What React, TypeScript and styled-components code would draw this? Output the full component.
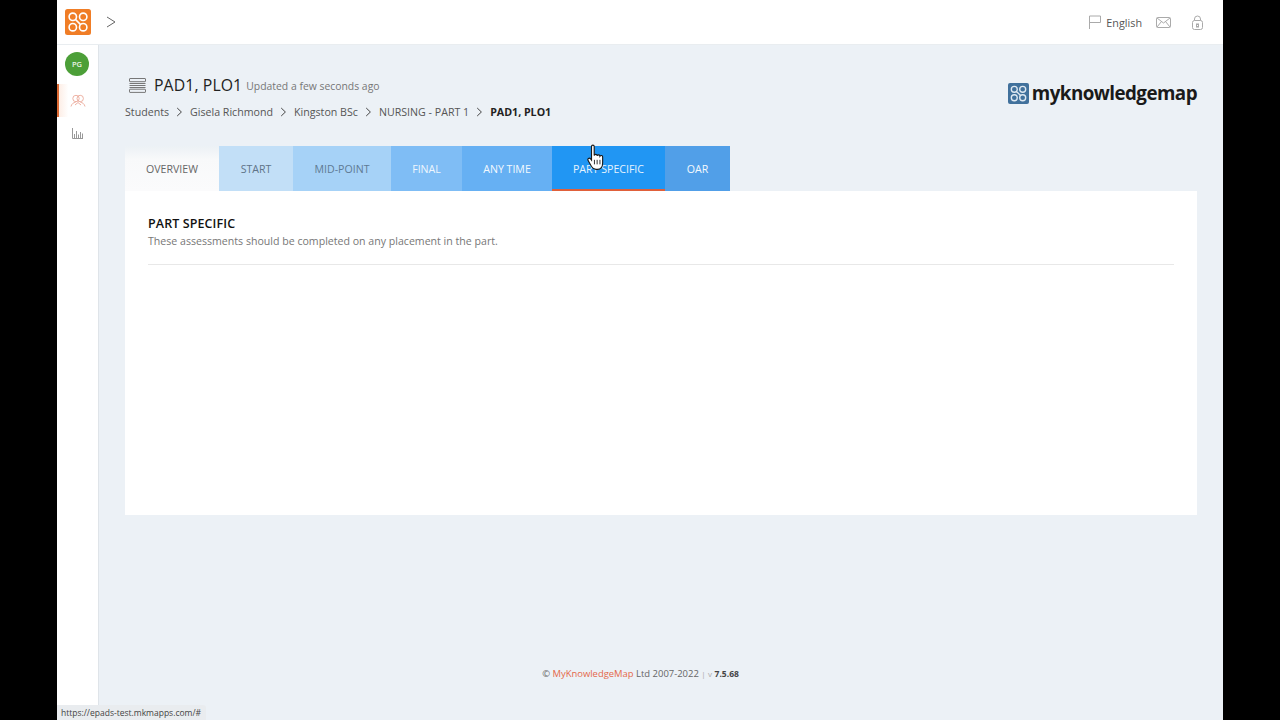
import React from 'react';
import styled, { createGlobalStyle } from 'styled-components';

const GlobalStyle = createGlobalStyle`
  html, body {
    margin: 0;
    padding: 0;
    height: 100%;
    overflow: hidden;
    background: #000;
    font-family: "Open Sans", "Liberation Sans", sans-serif;
  }
`;

const Frame = styled.div`
  position: relative;
  box-sizing: border-box;
  width: 1280px;
  height: 720px;
  padding: 0 57px;
  background: #000;
`;

const Screen = styled.div`
  display: flex;
  flex-direction: column;
  height: 100%;
  background: #ecf1f6;
`;

const TopBar = styled.header`
  display: flex;
  flex: 0 0 45px;
  box-sizing: border-box;
  align-items: center;
  justify-content: space-between;
  padding: 0 20px 0 8px;
  background: #fff;
  border-bottom: 1px solid #e9edf0;
`;

const TopLeft = styled.div`
  display: flex;
  align-items: center;
  gap: 15px;
`;

const TopRight = styled.div`
  display: flex;
  align-items: center;
  color: #555;
  font-size: 10.8px;
`;

const Lang = styled.span`
  display: flex;
  align-items: center;
  gap: 5px;
  margin-right: 14px;
`;

const LockWrap = styled.span`
  display: flex;
  margin-left: 21px;
`;

const Body = styled.div`
  display: flex;
  flex: 1;
  min-height: 0;
`;

const Sidebar = styled.aside`
  display: flex;
  flex: 0 0 42px;
  box-sizing: border-box;
  flex-direction: column;
  align-items: center;
  padding: 7px 1px 0 0;
  background: #fff;
  border-right: 1px solid #dfe4e9;
`;

const Avatar = styled.div`
  display: flex;
  width: 24px;
  height: 24px;
  align-items: center;
  justify-content: center;
  margin-bottom: 8px;
  border-radius: 50%;
  background: #4c9f38;
  color: #e8f4e4;
  font-size: 7.5px;
  font-weight: 600;
`;

const NavItem = styled.div<{ $active?: boolean }>`
  display: flex;
  box-sizing: border-box;
  align-self: stretch;
  height: 33px;
  align-items: center;
  justify-content: center;
  background: ${p => (p.$active ? 'linear-gradient(90deg, #fdeee6, #fff 25%)' : 'none')};
  border-left: ${p => (p.$active ? '2px solid #dd6a33' : 'none')};
`;

const Main = styled.main`
  display: flex;
  flex: 1;
  flex-direction: column;
  min-width: 0;
  padding: 29px 26px 0;
`;

const HeadRow = styled.div`
  display: flex;
  align-items: flex-start;
  justify-content: space-between;
`;

const TitleRow = styled.div`
  display: flex;
  height: 22px;
  align-items: center;
  padding-left: 4px;
`;

const Title = styled.h1`
  margin: 0 4px 0 8px;
  color: #222;
  font-size: 15.8px;
  font-weight: 400;
  letter-spacing: 0.1px;
`;

const Updated = styled.span`
  margin-top: 2px;
  color: #777;
  font-size: 10.4px;
`;

const Crumbs = styled.nav`
  display: flex;
  align-items: center;
  gap: 7px;
  height: 20px;
  margin-top: 6px;
  color: #555;
  font-size: 10.65px;
`;

const CrumbNow = styled.b`
  color: #222;
  font-weight: 700;
`;

const Logo = styled.div`
  display: flex;
  align-items: center;
  gap: 3px;
  margin-top: 6px;
  color: #1a1a1a;
  font-size: 18.8px;
  font-weight: 700;
  letter-spacing: -0.55px;
`;

const Tabs = styled.div`
  display: flex;
  height: 45px;
  margin-top: 24px;
`;

const Tab = styled.div<{ $bg: string; $fg: string; $width: number; $active?: boolean }>`
  display: flex;
  flex: 0 0 ${p => p.$width}px;
  align-items: center;
  justify-content: center;
  background: ${p => p.$bg};
  color: ${p => p.$fg};
  font-size: 10.6px;
  white-space: nowrap;
  box-shadow: ${p => (p.$active ? 'inset 0 -2px 0 #e0603a' : 'none')};
`;

const Card = styled.section`
  display: flex;
  flex-direction: column;
  height: 324px;
  box-sizing: border-box;
  padding: 24px 23px 0;
  background: #fff;
`;

const CardTitle = styled.h2`
  margin: 0;
  color: #111;
  font-size: 12.5px;
  font-weight: 600;
  letter-spacing: 0.1px;
  line-height: 17px;
`;

const CardText = styled.p`
  margin: 1px 0 0;
  padding-bottom: 15px;
  color: #777;
  font-size: 10.6px;
  line-height: 16px;
  border-bottom: 1px solid #e8e8e8;
`;

const Footer = styled.footer`
  margin-top: 152px;
  padding-right: 41px;
  color: #666;
  font-size: 9.45px;
  line-height: 14px;
  text-align: center;
`;

const FooterLink = styled.span`
  color: #e4684a;
`;

const FooterSep = styled.span`
  color: #aaa;
  font-size: 8px;
`;

const FooterVersion = styled.b`
  color: #444;
  font-size: 8.5px;
  font-weight: 700;
`;

const StatusTip = styled.div`
  position: absolute;
  left: 57px;
  bottom: 0;
  height: 15px;
  padding: 0 5px 0 4px;
  background: #e9ecef;
  border-top-right-radius: 3px;
  color: #444;
  font-size: 8.5px;
  line-height: 16px;
`;

const Cursor = styled.svg`
  position: absolute;
  left: 587px;
  top: 144px;
`;

const MapMark = ({ color, width }: { color: string; width: number }) => (
  <g fill="none" stroke={color} strokeWidth={width}>
    <circle cx="7.8" cy="7.8" r="3.7" />
    <circle cx="18.2" cy="7.8" r="3.7" />
    <circle cx="7.8" cy="18.2" r="3.7" />
    <circle cx="18.2" cy="18.2" r="3.7" />
    <path d="M10.4 10.4l5.2 5.2" />
  </g>
);

const tabs = [
  { label: 'OVERVIEW', width: 94, bg: 'linear-gradient(#ecf1f5, #f8f9fa 30%, #fbfbfc)', fg: '#666' },
  { label: 'START', width: 74, bg: '#c2dff7', fg: '#5f7488' },
  { label: 'MID-POINT', width: 98, bg: '#a6d2f7', fg: '#5f7a94' },
  { label: 'FINAL', width: 71, bg: '#7fbdf5', fg: '#eef6fd' },
  { label: 'ANY TIME', width: 90, bg: '#66b0f3', fg: '#f3f9fe' },
  { label: 'PART SPECIFIC', width: 113, bg: '#2196f3', fg: '#e6f3fe', active: true },
  { label: 'OAR', width: 65, bg: '#519fe8', fg: '#f3f9fe' },
];

const crumbs = ['Students', 'Gisela Richmond', 'Kingston BSc', 'NURSING - PART 1'];

const CrumbArrow = () => (
  <svg width="7" height="10" viewBox="0 0 7 10" fill="none" stroke="#444" strokeWidth="1">
    <path d="M1.2 1l4.2 4-4.2 4" />
  </svg>
);

export default function App() {
  return (
    <Frame>
      <GlobalStyle />
      <Screen>
        <TopBar>
          <TopLeft>
            <svg width="26" height="26" viewBox="0 0 26 26">
              <rect width="26" height="26" rx="2.5" fill="#f07d26" />
              <MapMark color="#fff" width={1.6} />
            </svg>
            <svg width="10" height="12" viewBox="0 0 10 12" fill="none" stroke="#666" strokeWidth="1">
              <path d="M1 1l8 5-8 5" />
            </svg>
          </TopLeft>
          <TopRight>
            <Lang>
              <svg width="12" height="14" viewBox="0 0 12 14" fill="none" stroke="#aaa" strokeWidth="1">
                <path d="M.5 14V1h11v6.5H.5" />
              </svg>
              English
            </Lang>
            <svg width="15" height="11" viewBox="0 0 15 11" fill="none" stroke="#aaa" strokeWidth="1">
              <rect x="0.5" y="0.5" width="14" height="10" rx="1" />
              <path d="M1 1l6.5 5L14 1M1 10l4.5-5.5M14 10L9.5 4.5" />
            </svg>
            <LockWrap>
              <svg width="11" height="15" viewBox="0 0 11 15" fill="none" stroke="#aaa" strokeWidth="1">
                <rect x="0.5" y="5.5" width="10" height="9" rx="2" />
                <path d="M2.5 5.5V4a3 3 0 0 1 6 0v1.5" />
                <rect x="4.5" y="9" width="2" height="3" />
              </svg>
            </LockWrap>
          </TopRight>
        </TopBar>
        <Body>
          <Sidebar>
            <Avatar>PG</Avatar>
            <NavItem $active>
              <svg width="16" height="14" viewBox="0 0 16 14" fill="none" stroke="#eba99a" strokeWidth="0.9">
                <circle cx="6" cy="4.5" r="3.2" />
                <circle cx="10.2" cy="4.5" r="3.2" />
                <path d="M1 12.5c.6-2.6 2.4-4 4.6-4.2M15 12.5c-.6-2.6-2.4-4-4.6-4.2M5 11l3-2.5 3 2.5" />
              </svg>
            </NavItem>
            <NavItem>
              <svg width="11" height="11" viewBox="0 0 11 11" fill="none" stroke="#999" strokeWidth="1">
                <path d="M.5 0v10.5H11M2.5 10V6M4.5 10V3M6.5 10V6.5M8.5 10V4M10.5 10V5.5" />
              </svg>
            </NavItem>
          </Sidebar>
          <Main>
            <HeadRow>
              <div>
                <TitleRow>
                  <svg width="17" height="15" viewBox="0 0 17 15" fill="none" stroke="#777" strokeWidth="1">
                    <rect x="0.5" y="0.5" width="16" height="3.2" rx="0.5" />
                    <path d="M0.5 5.5h16M0.5 7.5h16M0.5 9.5h16" />
                    <rect x="0.5" y="11.2" width="16" height="3.2" rx="0.5" />
                  </svg>
                  <Title>PAD1, PLO1</Title>
                  <Updated>Updated a few seconds ago</Updated>
                </TitleRow>
                <Crumbs>
                  {crumbs.map(c => (
                    <React.Fragment key={c}>
                      <span>{c}</span>
                      <CrumbArrow />
                    </React.Fragment>
                  ))}
                  <CrumbNow>PAD1, PLO1</CrumbNow>
                </Crumbs>
              </div>
              <Logo>
                <svg width="21" height="21" viewBox="0 0 26 26">
                  <rect width="26" height="26" rx="2.5" fill="#41719c" />
                  <MapMark color="#dfe9f2" width={1.7} />
                </svg>
                myknowledgemap
              </Logo>
            </HeadRow>
            <Tabs>
              {tabs.map(t => (
                <Tab key={t.label} $bg={t.bg} $fg={t.fg} $width={t.width} $active={t.active}>
                  {t.label}
                </Tab>
              ))}
            </Tabs>
            <Card>
              <CardTitle>PART SPECIFIC</CardTitle>
              <CardText>These assessments should be completed on any placement in the part.</CardText>
            </Card>
            <Footer>
              © <FooterLink>MyKnowledgeMap</FooterLink> Ltd 2007-2022 <FooterSep>|</FooterSep>{' '}
              <FooterSep>v</FooterSep> <FooterVersion>7.5.68</FooterVersion>
            </Footer>
          </Main>
        </Body>
      </Screen>
      <StatusTip>https://epads-test.mkmapps.com/#</StatusTip>
      <Cursor width="18" height="26" viewBox="0 0 16 23" preserveAspectRatio="none">
        <path
          d="M4 2.2c0-1.6 2.4-1.6 2.4 0v8c.4-1.4 2.5-1.3 2.6.2.5-1.2 2.4-1 2.5.4.6-1 2.3-.7 2.4.6v5.5c0 3-1.7 5.6-4.6 5.6H8c-2 0-3-1-4-2.6L1 14.6c-.9-1.5 1-2.8 2.2-1.4L4 14.2z"
          fill="#fff"
          stroke="#1a1a1a"
          strokeWidth="1"
        />
        <path d="M6.6 14v4M9 14v4M11.5 14v4" stroke="#1a1a1a" strokeWidth="0.8" />
      </Cursor>
    </Frame>
  );
}
